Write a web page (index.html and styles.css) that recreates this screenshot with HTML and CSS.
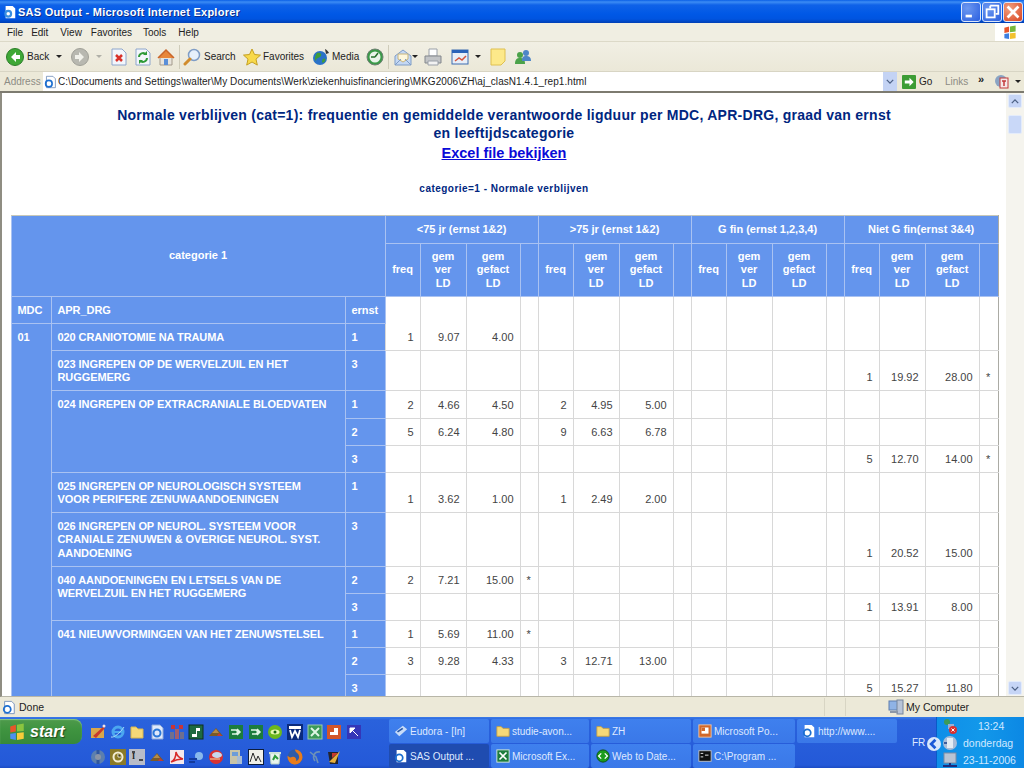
FILE: index.html
```html
<!DOCTYPE html>
<html lang="nl">
<head>
<meta charset="utf-8">
<title>SAS Output - Microsoft Internet Explorer</title>
<link rel="stylesheet" href="styles.css">
</head>
<body>
<div class="window">
  <header class="titlebar">
    <svg class="title-icon" viewBox="0 0 16 16"><path d="M3 1h8l3 3v11H3z" fill="#fff"/><circle cx="6" cy="10" r="4.5" fill="#3a8fe0"/><circle cx="6" cy="10" r="2" fill="#fff"/></svg>
    <span class="title-text">SAS Output - Microsoft Internet Explorer</span>
    <div class="win-btns">
      <div class="win-btn"><svg viewBox="0 0 20 20"><rect x="4" y="13" width="7" height="3" fill="#fff"/></svg></div>
      <div class="win-btn"><svg viewBox="0 0 20 20"><path d="M8 3h9v9h-3M8 3v3" fill="none" stroke="#fff" stroke-width="2"/><rect x="4" y="7" width="9" height="9" fill="none" stroke="#fff" stroke-width="2"/></svg></div>
      <div class="win-btn win-close"><svg viewBox="0 0 20 20"><path d="M5 5l10 10M15 5L5 15" stroke="#fff" stroke-width="3" stroke-linecap="square"/></svg></div>
    </div>
  </header>

  <nav class="menubar">
    <span class="menu m-file">File</span><span class="menu m-edit">Edit</span><span class="menu m-view">View</span><span class="menu m-fav">Favorites</span><span class="menu m-tools">Tools</span><span class="menu m-help">Help</span>
    <div class="flag-box">
      <svg viewBox="0 0 16 16" class="flag"><path d="M2 3l5-1.500v6L2 8.500z" fill="#e8552a"/><path d="M8 1.500l6-1v6.500l-6 .6z" fill="#78b83c"/><path d="M2 9.500l5-.6V15l-5-1z" fill="#3d7fe0"/><path d="M8 8.800l6-.6V14l-6 1z" fill="#f2c12e"/></svg>
    </div>
  </nav>

  <div class="toolbar">
    <svg class="ic first" viewBox="0 0 18 18"><circle cx="9" cy="9" r="8.500" fill="#3fa836" stroke="#2b7d28"/><path d="M10 4L5 9l5 5v-3h4V7h-4z" fill="#fff"/></svg>
    <span class="t-label l-back">Back</span>
    <i class="caret c-back"></i>
    <svg class="ic b-forward" viewBox="0 0 18 18"><circle cx="9" cy="9" r="8.500" fill="#b8b8b0" stroke="#a0a098"/><path d="M8 4l5 5-5 5v-3H4V7h4z" fill="#f1f1ea"/></svg>
    <i class="caret caret-grey c-forward"></i>
    <svg class="ic16 b-stop" viewBox="0 0 16 18"><path d="M1 1h10l4 4v12H1z" fill="#f3f6fc" stroke="#8ea6cc"/><path d="M5 7l6 6M11 7l-6 6" stroke="#d8322a" stroke-width="2.500"/></svg>
    <svg class="ic16 b-refresh" viewBox="0 0 16 18"><path d="M1 1h10l4 4v12H1z" fill="#f3f6fc" stroke="#8ea6cc"/><path d="M4 9a4 4 0 0 1 7-2.500M12 10a4 4 0 0 1-7 2.500" fill="none" stroke="#2f9a38" stroke-width="2"/><path d="M12 3v4H8zM4 16v-4h4z" fill="#2f9a38"/></svg>
    <svg class="ic b-home" viewBox="0 0 18 18"><path d="M3 9v8h12V9z" fill="#e8e4dc" stroke="#a39a8c"/><path d="M1 10l8-8 8 8" fill="#e8873a" stroke="#c9662b" stroke-width="1.500"/><rect x="7" y="11" width="4" height="6" fill="#5a8fd8"/></svg>
    <i class="tb-sep s-one"></i>
    <svg class="ic b-search" viewBox="0 0 18 18"><circle cx="11" cy="7" r="5.500" fill="#e6f0fb" stroke="#7f9dc6" stroke-width="1.500"/><path d="M7 11l-5 5" stroke="#d18c2c" stroke-width="3" stroke-linecap="round"/></svg>
    <span class="t-label l-search">Search</span>
    <svg class="ic b-star" viewBox="0 0 18 18"><path d="M9 1l2.500 5.500 6 .6-4.500 4 1.300 6L9 14l-5.300 3.100 1.300-6-4.500-4 6-.6z" fill="#f8d94a" stroke="#c4a023"/></svg>
    <span class="t-label l-fav">Favorites</span>
    <svg class="ic b-media" viewBox="0 0 18 18"><circle cx="8" cy="10" r="7" fill="#2a72c8"/><path d="M5 5c3-1 5 1 4 3s-4 1-5 4-2-3 1-7zM11 11c2-1 3 0 2 2s-3 2-3 1 0-2 1-3z" fill="#3f9c3a"/><path d="M13 1c2 1 3 2 4 4l-3 1z" fill="#353535"/></svg>
    <span class="t-label l-media">Media</span>
    <svg class="ic b-hist" viewBox="0 0 18 18"><circle cx="9" cy="9" r="8" fill="#3a9a48" stroke="#6e7f72"/><circle cx="9" cy="9" r="5.500" fill="#e9f4ea"/><path d="M9 9l3-4M9 9H5" stroke="#26702c" stroke-width="1.500"/></svg>
    <i class="tb-sep s-two"></i>
    <svg class="ic b-mail" viewBox="0 0 18 18"><path d="M1 8l8-6 8 6v9H1z" fill="#c4d8f4" stroke="#7f9dc6"/><path d="M4 6h10v5l-5 3-5-3z" fill="#fdf7dc" stroke="#c7b47c"/><path d="M1 17l6-6M17 17l-6-6" stroke="#7f9dc6"/></svg>
    <i class="caret c-mail"></i>
    <svg class="ic b-print" viewBox="0 0 18 18"><path d="M5 1h8v7H5z" fill="#fff" stroke="#9aa0a8"/><path d="M1 8h16v7H1z" fill="#c2c4c6" stroke="#83878c"/><path d="M4 13h10v4H4z" fill="#f2f2f2" stroke="#9aa0a8"/></svg>
    <svg class="ic b-edit" viewBox="0 0 18 18"><rect x="1" y="2" width="16" height="14" fill="#e8eef7" stroke="#3c6cb0"/><rect x="1" y="2" width="16" height="3" fill="#2a62b8"/><path d="M4 13l4-3 3 2 4-4" stroke="#d3543c" stroke-width="1.500" fill="none"/></svg>
    <i class="caret c-edit"></i>
    <svg class="ic16 b-note" viewBox="0 0 16 18"><path d="M1 1h14v12l-4 4H1z" fill="#fde98a" stroke="#dfc050"/></svg>
    <svg class="ic b-msgr" viewBox="0 0 18 18"><circle cx="6" cy="7" r="3" fill="#4ba24a"/><path d="M1 16c0-5 2-6 5-6s5 1 5 6z" fill="#4ba24a"/><circle cx="12" cy="5" r="3" fill="#4e86c8"/><path d="M8 13c0-4 1-5 4-5s5 1 5 5z" fill="#4e86c8"/></svg>
  </div>

  <div class="addressbar">
    <span class="addr-label">Address</span>
    <div class="addr-box">
      <svg class="addr-icon" viewBox="0 0 16 16"><path d="M3 1h8l3 3v11H3z" fill="#fff" stroke="#6f8db8"/><circle cx="6" cy="10" r="4" fill="none" stroke="#1d6fd0" stroke-width="2"/></svg>
      <span class="addr-text">C:\Documents and Settings\walter\My Documents\Werk\ziekenhuisfinanciering\MKG2006\ZH\aj_clasN1.4.1_rep1.html</span>
      <div class="combo"><svg viewBox="0 0 10 6" class="combo-arrow"><path d="M1 1l4 4 4-4" fill="none" stroke="#4d6185" stroke-width="1.600"/></svg></div>
    </div>
    <svg class="go-icon" viewBox="0 0 15 15"><rect width="15" height="15" rx="1" fill="#3c9c34"/><path d="M8 3l4.500 4.500L8 12V9H3V6h5z" fill="#fff"/></svg>
    <span class="go-text">Go</span>
    <span class="links">Links</span>
    <span class="chev">»</span>
    <svg class="pdf-icon" viewBox="0 0 16 16"><circle cx="7" cy="7" r="6" fill="#8aa4c4"/><rect x="6" y="4" width="8" height="10" fill="#f5e8e8" stroke="#c23a3a"/><path d="M8 7h4M10 7v5" stroke="#c23a3a" stroke-width="1.500"/></svg>
    <i class="caret c-pdf"></i>
  </div>

  <div class="viewport">
    <main class="page">
      <h1 class="report-title">Normale verblijven (cat=1): frequentie en gemiddelde verantwoorde ligduur per MDC, APR-DRG, graad van ernst<br>en leeftijdscategorie</h1>
      <p class="excel"><a href="#">Excel file bekijken</a></p>
      <p class="subtitle">categorie=1 - Normale verblijven</p>
      <table class="report">
        <colgroup>
          <col class="c-mdc"><col class="c-drg"><col class="c-ernst">
          <col class="c-f"><col class="c-v"><col class="c-g"><col class="c-s">
          <col class="c-f"><col class="c-v"><col class="c-g"><col class="c-s">
          <col class="c-f"><col class="c-v"><col class="c-g"><col class="c-s">
          <col class="c-f"><col class="c-v"><col class="c-g"><col class="c-s2">
        </colgroup>
        <tr class="r-head1">
          <th colspan="3" rowspan="2">categorie 1</th>
          <th colspan="4">&lt;75 jr (ernst 1&amp;2)</th>
          <th colspan="4">&gt;75 jr (ernst 1&amp;2)</th>
          <th colspan="4">G fin (ernst 1,2,3,4)</th>
          <th colspan="4">Niet G fin(ernst 3&amp;4)</th>
        </tr>
        <tr class="r-head2">
          <th>freq</th><th>gem<br>ver<br>LD</th><th>gem<br>gefact<br>LD</th><th></th>
          <th>freq</th><th>gem<br>ver<br>LD</th><th>gem<br>gefact<br>LD</th><th></th>
          <th>freq</th><th>gem<br>ver<br>LD</th><th>gem<br>gefact<br>LD</th><th></th>
          <th>freq</th><th>gem<br>ver<br>LD</th><th>gem<br>gefact<br>LD</th><th></th>
        </tr>
        <tr class="r27">
          <th class="lab">MDC</th><th class="lab">APR_DRG</th><th class="lab">ernst</th>
          <td rowspan="2">1</td><td rowspan="2">9.07</td><td rowspan="2">4.00</td><td rowspan="2"></td>
          <td rowspan="2"></td><td rowspan="2"></td><td rowspan="2"></td><td rowspan="2"></td>
          <td rowspan="2"></td><td rowspan="2"></td><td rowspan="2"></td><td rowspan="2"></td>
          <td rowspan="2"></td><td rowspan="2"></td><td rowspan="2"></td><td rowspan="2"></td>
        </tr>
        <tr class="r27"><th class="lab" rowspan="12">01</th><th class="lab">020 CRANIOTOMIE NA TRAUMA</th><th class="lab">1</th></tr>
        <tr class="r40">
          <th class="lab">023 INGREPEN OP DE WERVELZUIL EN HET RUGGEMERG</th><th class="lab">3</th>
          <td></td><td></td><td></td><td></td><td></td><td></td><td></td><td></td><td></td><td></td><td></td><td></td>
          <td>1</td><td>19.92</td><td>28.00</td><td class="st">*</td>
        </tr>
        <tr class="r28">
          <th class="lab" rowspan="3">024 INGREPEN OP EXTRACRANIALE BLOEDVATEN</th><th class="lab">1</th>
          <td>2</td><td>4.66</td><td>4.50</td><td></td><td>2</td><td>4.95</td><td>5.00</td><td></td>
          <td></td><td></td><td></td><td></td><td></td><td></td><td></td><td></td>
        </tr>
        <tr class="r27">
          <th class="lab">2</th>
          <td>5</td><td>6.24</td><td>4.80</td><td></td><td>9</td><td>6.63</td><td>6.78</td><td></td>
          <td></td><td></td><td></td><td></td><td></td><td></td><td></td><td></td>
        </tr>
        <tr class="r27">
          <th class="lab">3</th>
          <td></td><td></td><td></td><td></td><td></td><td></td><td></td><td></td><td></td><td></td><td></td><td></td>
          <td>5</td><td>12.70</td><td>14.00</td><td class="st">*</td>
        </tr>
        <tr class="r40">
          <th class="lab">025 INGREPEN OP NEUROLOGISCH SYSTEEM VOOR PERIFERE ZENUWAANDOENINGEN</th><th class="lab">1</th>
          <td>1</td><td>3.62</td><td>1.00</td><td></td><td>1</td><td>2.49</td><td>2.00</td><td></td>
          <td></td><td></td><td></td><td></td><td></td><td></td><td></td><td></td>
        </tr>
        <tr class="r54">
          <th class="lab">026 INGREPEN OP NEUROL. SYSTEEM VOOR CRANIALE ZENUWEN &amp; OVERIGE NEUROL. SYST. AANDOENING</th><th class="lab">3</th>
          <td></td><td></td><td></td><td></td><td></td><td></td><td></td><td></td><td></td><td></td><td></td><td></td>
          <td>1</td><td>20.52</td><td>15.00</td><td></td>
        </tr>
        <tr class="r27">
          <th class="lab" rowspan="2">040 AANDOENINGEN EN LETSELS VAN DE WERVELZUIL EN HET RUGGEMERG</th><th class="lab">2</th>
          <td>2</td><td>7.21</td><td>15.00</td><td class="st">*</td>
          <td></td><td></td><td></td><td></td><td></td><td></td><td></td><td></td><td></td><td></td><td></td><td></td>
        </tr>
        <tr class="r27">
          <th class="lab">3</th>
          <td></td><td></td><td></td><td></td><td></td><td></td><td></td><td></td><td></td><td></td><td></td><td></td>
          <td>1</td><td>13.91</td><td>8.00</td><td></td>
        </tr>
        <tr class="r27">
          <th class="lab" rowspan="3">041 NIEUWVORMINGEN VAN HET ZENUWSTELSEL</th><th class="lab">1</th>
          <td>1</td><td>5.69</td><td>11.00</td><td class="st">*</td>
          <td></td><td></td><td></td><td></td><td></td><td></td><td></td><td></td><td></td><td></td><td></td><td></td>
        </tr>
        <tr class="r27">
          <th class="lab">2</th>
          <td>3</td><td>9.28</td><td>4.33</td><td></td><td>3</td><td>12.71</td><td>13.00</td><td></td>
          <td></td><td></td><td></td><td></td><td></td><td></td><td></td><td></td>
        </tr>
        <tr class="r27">
          <th class="lab">3</th>
          <td></td><td></td><td></td><td></td><td></td><td></td><td></td><td></td><td></td><td></td><td></td><td></td>
          <td>5</td><td>15.27</td><td>11.80</td><td></td>
        </tr>
      </table>
    </main>
    <aside class="scrollbar">
      <div class="sb-btn"><svg viewBox="0 0 10 6" class="sb-arrow"><path d="M1 5l4-4 4 4" fill="none" stroke="#4d6185" stroke-width="1.600"/></svg></div>
      <div class="sb-thumb"></div>
      <div class="sb-track"></div>
      <div class="sb-btn"><svg viewBox="0 0 10 6" class="sb-arrow"><path d="M1 1l4 4 4-4" fill="none" stroke="#4d6185" stroke-width="1.600"/></svg></div>
    </aside>
  </div>

  <footer class="statusbar">
    <svg class="st-icon" viewBox="0 0 16 16"><path d="M3 1h8l3 3v11H3z" fill="#fff" stroke="#6f8db8"/><circle cx="6" cy="10" r="4" fill="none" stroke="#1d6fd0" stroke-width="2"/></svg>
    <span class="st-done">Done</span>
    <i class="st-sep s1"></i><i class="st-sep s2"></i>
    <svg class="st-pc" viewBox="0 0 16 16"><rect x="1" y="2" width="11" height="9" fill="#8fb3e6" stroke="#5f7fae"/><rect x="9" y="1" width="6" height="14" fill="#b8c4d8" stroke="#77859c"/><rect x="2" y="12" width="8" height="2" fill="#8c97a8"/></svg>
    <span class="st-pc-text">My Computer</span>
  </footer>

  <div class="taskbar">
    <div class="start-col">
      <div class="start">
        <svg class="start-flag" viewBox="0 0 16 16"><path d="M2 3l5-1.500v6L2 8.500z" fill="#e8552a"/><path d="M8 1.500l6-1v6.500l-6 .6z" fill="#8bc53f"/><path d="M2 9.500l5-.6V15l-5-1z" fill="#4d90f0"/><path d="M8 8.800l6-.6V14l-6 1z" fill="#f7cc3a"/></svg>
        <span class="start-text">start</span>
      </div>
    </div>
    <div class="quick">
      <svg viewBox="0 0 16 16"><rect x="1" y="4" width="13" height="10" fill="#d9a74a"/><path d="M3 12L13 3l2 1-9 10z" fill="#c93a2c"/><circle cx="14" cy="2" r="1.500" fill="#f4e3e3"/></svg>
      <svg viewBox="0 0 16 16"><circle cx="8" cy="8" r="5" fill="none" stroke="#4ba7f0" stroke-width="3"/><path d="M3 8h10" stroke="#4ba7f0" stroke-width="2"/><path d="M1 13c3 1 9-4 13-10" fill="none" stroke="#a8dcf8"/></svg>
      <svg viewBox="0 0 16 16"><path d="M2 3h5l2 2h5v9H2z" fill="#f5d878" stroke="#d8b64e"/></svg>
      <svg viewBox="0 0 16 16"><path d="M3 1h8l3 3v11H3z" fill="#dfe9fb" stroke="#8da9d8"/><circle cx="8" cy="9" r="3.500" fill="none" stroke="#2b78d8" stroke-width="2"/></svg>
      <svg viewBox="0 0 16 16"><rect x="1" y="8" width="4" height="7" fill="#6f6f8f"/><rect x="6" y="5" width="4" height="10" fill="#9f5f6f"/><rect x="11" y="8" width="4" height="7" fill="#6f6f8f"/><path d="M2 1h4v4H2zM10 1h4v4h-4z" fill="#c83535"/></svg>
      <svg viewBox="0 0 16 16"><rect x="1" y="1" width="14" height="14" fill="#1e6a40" stroke="#0f2f20"/><path d="M4 10h4V4h4v3H9v6H4z" fill="#fff"/></svg>
      <svg viewBox="0 0 16 16"><path d="M1 12l7-8 7 8z" fill="#7a5a28"/><path d="M4 9l4-4 3 4z" fill="#b48a4a"/><path d="M11 9l3 3H9z" fill="#c23a3a"/></svg>
      <svg viewBox="0 0 16 16"><rect x="1" y="1" width="14" height="14" fill="#1c7c3c"/><path d="M3 6l5 0 2 2-2 2H4M9 5l3 3-3 3" fill="none" stroke="#dff5e4" stroke-width="1.500"/></svg>
      <svg viewBox="0 0 16 16"><rect x="1" y="1" width="14" height="14" fill="#1c7c3c"/><path d="M3 6l5 0 2 2-2 2H4M9 5l3 3-3 3" fill="none" stroke="#dff5e4" stroke-width="1.500"/></svg>
      <svg viewBox="0 0 16 16"><circle cx="8" cy="8" r="7" fill="#6cb81c"/><ellipse cx="8" cy="8" rx="4.500" ry="2.500" fill="#e8f8b0"/><circle cx="8" cy="8" r="1.500" fill="#18680c"/></svg>
      <svg viewBox="0 0 16 16"><rect x="0" y="0" width="16" height="16" fill="#0a2a7c"/><rect x="2" y="2" width="12" height="3" fill="#fff"/><path d="M3 6l2 7 3-6 3 6 2-7" fill="none" stroke="#fff" stroke-width="1.800"/></svg>
      <svg viewBox="0 0 16 16"><rect x="1" y="1" width="14" height="14" fill="#3c9a58"/><path d="M4 4l8 8M12 4l-8 8" stroke="#dff5e4" stroke-width="2"/><rect x="1" y="1" width="14" height="14" fill="none" stroke="#9ccaa8"/></svg>
      <svg viewBox="0 0 16 16"><rect x="1" y="1" width="14" height="14" fill="#d2562a"/><rect x="4" y="4" width="8" height="7" fill="#fff"/><rect x="4" y="4" width="4" height="4" fill="#d2562a"/></svg>
      <svg viewBox="0 0 16 16"><rect x="1" y="1" width="14" height="14" fill="#3436b8"/><path d="M4 4h5L4 9zM12 12L6 6" fill="#fff" stroke="#fff"/></svg>

      <svg viewBox="0 0 16 16"><circle cx="8" cy="8" r="7" fill="#5c7fae"/><path d="M8 1v14" stroke="#2f56a0" stroke-width="3"/><circle cx="8" cy="8" r="3" fill="#8a94a6"/></svg>
      <svg viewBox="0 0 16 16"><rect width="16" height="16" fill="#8a7a28"/><circle cx="8" cy="8" r="4.500" fill="none" stroke="#f2edd2" stroke-width="2"/><path d="M8 5v3h3" stroke="#f2edd2"/></svg>
      <svg viewBox="0 0 16 16"><rect width="16" height="16" fill="#b8bcc8"/><text x="3" y="10" class="mini">I</text><path d="M3 3h3M10 11h4" stroke="#222" stroke-width="1.500"/></svg>
      <svg viewBox="0 0 16 16"><path d="M1 12l7-8 7 8z" fill="#7a5a28"/><path d="M4 9l4-4 3 4z" fill="#b48a4a"/><path d="M11 9l3 3H9z" fill="#c23a3a"/></svg>
      <svg viewBox="0 0 16 16"><rect x="1" y="1" width="14" height="14" fill="#f4e8ec"/><path d="M2 13c4-2 5-7 5-10 1 4 3 6 7 7-4 0-8 1-12 3z" fill="none" stroke="#d82828" stroke-width="1.500"/></svg>
      <svg viewBox="0 0 16 16"><circle cx="11" cy="7" r="4" fill="#88b8ec"/><path d="M1 10h8M1 13h6" stroke="#143a9c" stroke-width="2"/></svg>
      <svg viewBox="0 0 16 16"><circle cx="8" cy="8" r="7" fill="#d83232"/><ellipse cx="9" cy="6" rx="5" ry="3" fill="#c8d8ec"/><path d="M2 10h10" stroke="#f4e4a0"/></svg>
      <svg viewBox="0 0 16 16"><rect x="2" y="1" width="10" height="14" fill="#c8c4a8"/><rect x="4" y="3" width="6" height="4" fill="#6c9cd8"/><rect x="9" y="7" width="5" height="8" fill="#a8bcd4"/></svg>
      <svg viewBox="0 0 16 16"><rect width="16" height="16" fill="#0c1c3c"/><rect x="1" y="1" width="14" height="14" fill="#f0f0e8"/><path d="M2 13L5 4l3 8 2-5 3 6" fill="none" stroke="#2a2a2a"/></svg>
      <svg viewBox="0 0 16 16"><path d="M3 4h10l-1 11H4z" fill="#e8f4ec" stroke="#b8d0c4"/><path d="M2 3h12v2H2z" fill="#d0e4d8"/><path d="M6 11l2-4 3 3" fill="none" stroke="#2c9a3c" stroke-width="2"/></svg>
      <svg viewBox="0 0 16 16"><circle cx="8" cy="8" r="7.500" fill="#2f5ca8"/><path d="M8 .5a7.500 7.500 0 1 1-7.400 6.300C2 8 3 9 5 8c3-1 5 2 4 4 4-1 4-6 1-8-1-1-2-2-2-3.500z" fill="#e87c1c"/></svg>
      <svg viewBox="0 0 16 16"><path d="M3 3l6 5 2 6M13 3c-6-1-8 5-5 9" fill="none" stroke="#6c90b8" stroke-width="1.600"/></svg>
      <svg viewBox="0 0 16 16"><path d="M2 3h10v12H4z" fill="#24242c"/><path d="M3 13L14 2l-5 12z" fill="#e8b03c"/><path d="M6 4l6 0-6 5z" fill="#c83a2c"/></svg>
    </div>

    <div class="tasks">
      <div class="task"><svg viewBox="0 0 16 16"><path d="M1 9l9-7 5 4-9 8z" fill="#c8dcf8"/><path d="M4 9l6-4" stroke="#2858a8" stroke-width="2"/></svg><span>Eudora - [In]</span></div>
      <div class="task"><svg viewBox="0 0 16 16"><path d="M1 3h5l2 2h7v9H1z" fill="#f5d878" stroke="#c8a040"/></svg><span>studie-avon...</span></div>
      <div class="task"><svg viewBox="0 0 16 16"><path d="M1 3h5l2 2h7v9H1z" fill="#f5d878" stroke="#c8a040"/></svg><span>ZH</span></div>
      <div class="task"><svg viewBox="0 0 16 16"><rect x="1" y="1" width="14" height="14" fill="#d2682a" stroke="#f0c8a8"/><rect x="4" y="4" width="8" height="7" fill="#fff"/><rect x="4" y="4" width="4" height="4" fill="#d2682a"/></svg><span>Microsoft Po...</span></div>
      <div class="task"><svg viewBox="0 0 16 16"><path d="M3 1h8l3 3v11H3z" fill="#fff"/><circle cx="6" cy="10" r="4" fill="none" stroke="#1d6fd0" stroke-width="2"/></svg><span>http://www....</span></div>
      <div class="task active"><svg viewBox="0 0 16 16"><path d="M3 1h8l3 3v11H3z" fill="#fff"/><circle cx="6" cy="10" r="4" fill="none" stroke="#1d6fd0" stroke-width="2"/></svg><span>SAS Output ...</span></div>
      <div class="task"><svg viewBox="0 0 16 16"><rect x="1" y="1" width="14" height="14" fill="#1c7c3c" stroke="#e0f0e4"/><path d="M4 4l8 8M12 4l-8 8" stroke="#fff" stroke-width="2"/></svg><span>Microsoft Ex...</span></div>
      <div class="task"><svg viewBox="0 0 16 16"><circle cx="8" cy="8" r="7" fill="#1c9c1c" stroke="#0a4a0a"/><path d="M6 5L3 8l3 3M10 5l3 3-3 3" fill="none" stroke="#fff" stroke-width="1.500"/></svg><span>Web to Date...</span></div>
      <div class="task"><svg viewBox="0 0 16 16"><rect x="1" y="2" width="14" height="12" fill="#101010" stroke="#c8c8c8"/><path d="M3 5h3M3 9h3M8 7h4" stroke="#fff"/></svg><span>C:\Program ...</span></div>
    </div>

    <span class="lang">FR</span>

    <div class="tray">
      <div class="tray-chevron"><svg viewBox="0 0 10 10"><path d="M6 2L3 5l3 3" fill="none" stroke="#1a5ad8" stroke-width="2"/></svg></div>
      <div class="tray-row">
        <svg viewBox="0 0 16 16"><circle cx="5" cy="4" r="3" fill="#3c9a58"/><rect x="6" y="6" width="6" height="5" fill="#94b0d8"/><circle cx="11" cy="12" r="4" fill="#d83030"/><path d="M9.500 10.500l3 3M12.500 10.500l-3 3" stroke="#fff"/></svg>
        <span class="t-time">13:24</span>
      </div>
      <div class="tray-row">
        <svg viewBox="0 0 16 16"><circle cx="8" cy="8" r="7" fill="#a8bcd8"/><rect x="5" y="3" width="6" height="10" fill="#e4ecf4"/><path d="M2 8h3" stroke="#3c5c9c" stroke-width="2"/></svg>
        <span>donderdag</span>
      </div>
      <div class="tray-row">
        <svg viewBox="0 0 16 16"><rect x="2" y="1" width="12" height="10" fill="#b8c4d4" stroke="#7c8ca4"/><path d="M1 13h14v2H1z" fill="#1c2c7c"/><path d="M8 11v3" stroke="#1c2c7c" stroke-width="2"/></svg>
        <span>23-11-2006</span>
      </div>
    </div>
  </div>
</div>
</body>
</html>
```

FILE: styles.css
```css
* { box-sizing: border-box; }
html, body { margin: 0; padding: 0; height: 100%; overflow: hidden; }
body { font-family: "Liberation Sans", Arial, sans-serif; font-size: 10px; background: #ece9d8; color: #222; }
.window { width: 1024px; height: 768px; display: flex; flex-direction: column; overflow: hidden; }

.titlebar { height: 23px; flex: none; display: flex; align-items: center; padding-left: 3px; color: #fff;
  background: linear-gradient(#0a5fe6 0, #3c8cf4 2px, #0f62e8 5px, #0058e6 14px, #0054e0 19px, #003fb4 23px); }
.title-icon { width: 14px; height: 16px; }
.title-text { margin-left: 1px; font-weight: bold; font-size: 11px; letter-spacing: .25px; text-shadow: 1px 1px 0 #0f2f8a; white-space: nowrap; }
.win-btns { margin-left: auto; display: flex; gap: 1px; padding-right: 1px; }
.win-btn { width: 20px; height: 20px; border: 1px solid #dbe6fb; border-radius: 3px; background: radial-gradient(circle at 30% 30%, #6c98f0, #2a5fe0); }
.win-btn svg { display: block; width: 100%; height: 100%; }
.win-close { background: radial-gradient(circle at 30% 30%, #f0a080, #d9431f); }

.menubar { height: 19px; flex: none; display: flex; align-items: center; background: #f0eee2; border-bottom: 1px solid #dcd9c8; color: #222; }
.m-file { margin-left: 7px; }
.m-edit { margin-left: 8px; }
.m-view { margin-left: 12px; }
.m-fav { margin-left: 9px; }
.m-tools { margin-left: 11px; }
.m-help { margin-left: 12px; }
.flag-box { margin-left: auto; width: 29px; height: 18px; background: #fff; display: flex; align-items: center; justify-content: center; }
.flag { width: 16px; height: 15px; }

.toolbar { height: 30px; flex: none; display: flex; align-items: center; background: linear-gradient(#f1efe4, #ebe8d8); border-bottom: 1px solid #d8d5c4; padding-left: 6px; }
.ic { width: 18px; height: 18px; flex: none; }
.ic16 { width: 16px; height: 18px; flex: none; }
.t-label { white-space: nowrap; color: #222; }
.caret { width: 0; height: 0; flex: none; border-left: 3px solid transparent; border-right: 3px solid transparent; border-top: 3px solid #222; }
.caret-grey { border-top-color: #b0b0a8; }
.l-back { margin-left: 3px; width: 22px; }
.c-back { margin-left: 7px; }
.b-forward { margin-left: 9px; }
.c-forward { margin-left: 7px; }
.b-stop { margin-left: 9px; }
.b-refresh { margin-left: 8px; }
.b-home { margin-left: 6px; }
.tb-sep { width: 1px; height: 24px; background: #cfccba; flex: none; }
.s-one { margin-left: 4px; }
.b-search { margin-left: 3px; }
.l-search { margin-left: 3px; width: 31px; }
.b-star { margin-left: 8px; }
.l-fav { margin-left: 2px; width: 41px; }
.b-media { margin-left: 8px; }
.l-media { margin-left: 2px; width: 25px; }
.b-hist { margin-left: 9px; }
.s-two { margin-left: 4px; }
.b-mail { margin-left: 5px; }
.c-mail { margin-left: 0; }
.b-print { margin-left: 6px; }
.b-edit { margin-left: 9px; }
.c-edit { margin-left: 6px; }
.b-note { margin-left: 9px; }
.b-msgr { margin-left: 8px; }

.addressbar { height: 21px; flex: none; display: flex; align-items: center; background: #ece9d8; border-bottom: 2px solid #7d7b70; }
.addr-label { margin-left: 4px; width: 39px; color: #8c8c84; }
.addr-box { width: 854px; height: 19px; background: #fff; display: flex; align-items: center; padding-left: 1px; }
.addr-icon { width: 13px; height: 14px; flex: none; }
.addr-text { margin-left: 1px; white-space: nowrap; color: #222; letter-spacing: .057px; }
.combo { margin-left: auto; width: 14px; height: 19px; background: #c4d3f4; display: flex; align-items: center; justify-content: center; }
.combo-arrow { width: 8px; height: 5px; }
.go-icon { margin-left: 5px; width: 14px; height: 14px; flex: none; }
.go-text { margin-left: 3px; width: 13px; }
.links { margin-left: 13px; width: 24px; color: #8c8c84; }
.chev { margin-left: 9px; font-size: 11px; font-weight: bold; position: relative; top: -3px; }
.pdf-icon { margin-left: 10px; width: 16px; height: 16px; flex: none; }
.c-pdf { margin-left: 5px; }

.viewport { flex: 1 1 0; min-height: 0; display: flex; overflow: hidden; background: #fff; border-left: 2px solid #8f8d82; border-bottom: 1px solid #b8b6a8; }
.page { flex: 1; min-width: 0; overflow: hidden; padding-left: 8.5px; }
.report-title { margin: 13px 0 0 -8.5px; text-align: center; font-size: 14px; letter-spacing: .26px; line-height: 18px; font-weight: bold; color: #00267f; }
.excel { margin: 2px 0 0 -8.5px; text-align: center; font-size: 14.500px; line-height: 18px; font-weight: bold; }
.excel a { color: #0a0ad8; text-decoration: underline; }
.subtitle { margin: 21px 0 0 -8.5px; text-align: center; font-size: 10px; line-height: 12px; font-weight: bold; letter-spacing: .47px; color: #00267f; }

.report { border-collapse: collapse; table-layout: fixed; width: 987px; margin-top: 20px; font-size: 11px; line-height: 13.300px; }
.c-mdc { width: 40px; }
.c-drg { width: 294px; }
.c-ernst { width: 40px; }
.c-f { width: 35px; }
.c-v { width: 46px; }
.c-g { width: 54px; }
.c-s { width: 18px; }
.c-s2 { width: 19px; }
.report th { background: #6495ed; color: #fff; border: 1px solid #a9c2f2; font-weight: bold; text-align: center; padding: 0 3px; }
.report th.lab { text-align: left; vertical-align: top; padding: 7px 12px 2px 6px; letter-spacing: -.08px; }
.report td { background: #fff; border: 1px solid #d8d8d8; text-align: right; vertical-align: bottom; padding: 0 6px 6px 2px; color: #444; }
.report td.st { text-align: center; padding-right: 3px; }
.report tr > :last-child { border-right-color: #ababa4; }
.r-head1 th { border-top-color: #c8c8b8; }
.r-head1 { height: 28px; }
.r-head2 { height: 53px; }
.r27 { height: 27px; }
.r28 { height: 28px; }
.r40 { height: 40px; }
.r54 { height: 54px; }

.scrollbar { width: 18px; flex: none; display: flex; flex-direction: column; background: #f5f4ee; padding: 1px 2px 1px 2px; }
.sb-btn { height: 14px; flex: none; background: #c6d5f6; border: 1px solid #e4ecfb; border-radius: 2px; display: flex; align-items: center; justify-content: center; }
.sb-arrow { width: 8px; height: 5px; }
.sb-thumb { height: 19px; flex: none; margin-top: 7px; background: #c9d8f8; border: 1px solid #e4ecfb; border-radius: 2px; }
.sb-track { flex: 1; }

.statusbar { height: 20px; flex: none; display: flex; align-items: center; background: #ece9d8; color: #222; font-size: 10.500px; }
.st-icon { width: 14px; height: 15px; margin-left: 2px; flex: none; }
.st-done { margin-left: 3px; width: 30px; }
.st-sep { width: 1px; height: 18px; background: #d8d5c4; flex: none; }
.st-sep.s1 { margin-left: 775px; }
.st-sep.s2 { margin-left: 20px; }
.st-pc { width: 16px; height: 16px; margin-left: 42px; flex: none; }
.st-pc-text { margin-left: 2px; white-space: nowrap; }

.taskbar { height: 51px; flex: none; display: flex; align-items: flex-start; position: relative; color: #e6eeff;
  background: linear-gradient(#3b7ce8 0, #2a62dc 3px, #2459d8 48px, #1c4cc4 51px); }
.start-col { width: 90px; flex: none; padding-top: 2px; }
.start { width: 82px; height: 25px; display: flex; align-items: center; padding-left: 8px; border-radius: 0 8px 8px 0;
  background: linear-gradient(#4f9a4c, #3f9440 40%, #37893a); box-shadow: inset 0 1px 1px #88c888; }
.start-flag { width: 18px; height: 18px; flex: none; }
.start-text { margin-left: 4px; color: #fff; font-weight: bold; font-style: italic; font-size: 16px; text-shadow: 1px 1px 1px #1d4a1d; }
.quick { display: grid; width: 276px; flex: none; grid-template-columns: repeat(14, 19.700px); grid-auto-rows: 25px; align-items: center; margin-top: 2px; }
.quick svg { width: 16px; height: 16px; }
.mini { font-size: 8px; font-weight: bold; fill: #222; font-family: "Liberation Serif", serif; }
.tasks { margin-left: 23px; width: 508px; flex: none; display: grid; grid-template-columns: 100px 98px 100px 102px 100px; grid-auto-rows: 24px; column-gap: 2px; row-gap: 1px; margin-top: 2px; }
.task { display: flex; align-items: center; gap: 2px; padding-left: 5px; background: linear-gradient(#3f80ee, #3a78e8); border-radius: 2px; color: #dfe9ff; white-space: nowrap; overflow: hidden; }
.task svg { width: 14px; height: 14px; flex: none; }
.task.active { background: #1f4cb0; }
.lang { margin-left: 15px; width: 24px; margin-top: 20px; color: #dfe9ff; }
.tray { position: absolute; left: 936px; top: 0; right: 0; bottom: 0; background: linear-gradient(90deg, #0f8ee8, #1298ea 50%, #0c88e4); border-left: 1px solid #0a5ac8; display: grid; grid-auto-rows: 17px; padding-left: 5px; color: #cfe8ff; font-size: 10.500px; }
.tray-row { display: flex; align-items: center; gap: 5px; }
.tray-row svg { width: 16px; height: 16px; flex: none; }
.t-time { margin-left: 15px; }
.tray-chevron { position: absolute; left: -10px; top: 20px; width: 14px; height: 14px; border-radius: 50%; background: #d8e8fc; }
.tray-chevron svg { display: block; width: 14px; height: 14px; }
```
